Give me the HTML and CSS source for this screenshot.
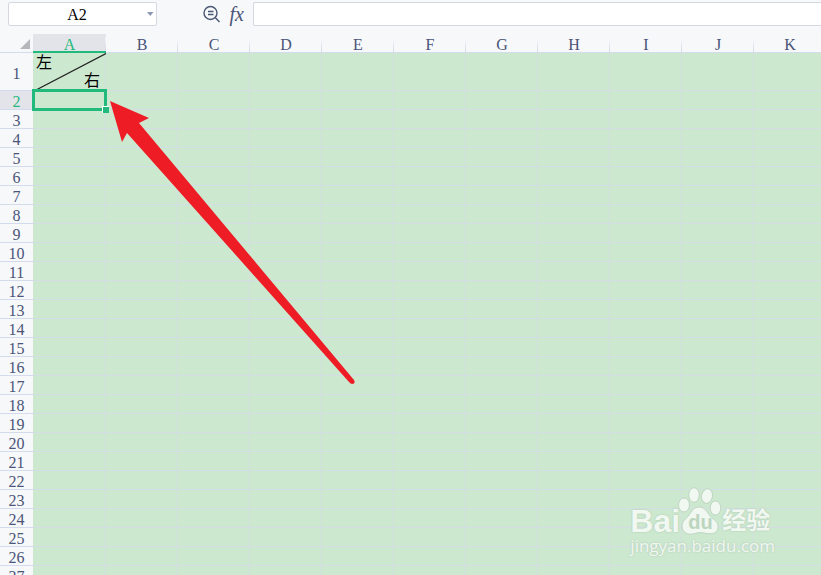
FILE: index.html
```html
<!DOCTYPE html>
<html lang="zh-CN">
<head>
    <meta charset="UTF-8">
    <meta name="viewport" content="width=device-width, initial-scale=1.0">
    <title>Spreadsheet</title>
    <link rel="stylesheet" href="styles.css">
</head>
<body>
    <header class="toolbar">
        <div class="name-box">
            <input type="text" class="name-input" value="A2" aria-label="Name box">
            <button type="button" class="name-toggle" aria-label="Show names">
                <svg width="7" height="4" viewBox="0 0 7 4"><path d="M0 0H6.5L3.3 4Z" fill="#8c98b3"/></svg>
            </button>
        </div>
        <div class="tools">
            <button type="button" class="tool" aria-label="Search">
                <svg width="18" height="18" viewBox="0 0 18 18" fill="none" stroke="#4a5673" stroke-width="1.4">
                    <circle cx="7.5" cy="8" r="6.5"/>
                    <path d="M12.2 12.6L16.5 17M5 6.5H10.5M5 9.5H10.5"/>
                </svg>
            </button>
            <button type="button" class="tool fx" aria-label="Insert function">fx</button>
        </div>
        <input type="text" class="formula-input" aria-label="Formula">
    </header>
    <main class="sheet">
        <table class="grid">
            <thead>
                <tr id="columns">
                    <th class="corner"><svg width="10" height="10" viewBox="0 0 10 10"><path d="M10 0V10H0Z" fill="#b5b7bb"/></svg></th>
                </tr>
            </thead>
            <tbody id="rows"></tbody>
        </table>
        <svg class="arrow" width="246" height="285" viewBox="0 0 246 285">
            <path d="M0 1L39 18L29 23L244 280Q246 284 242 284Q241 284 239 282L17 33L12 42Z" fill="#ee1c25"></path>
        </svg>
        <div class="watermark">
            <div class="watermark-logo">
                <span class="latin">Bai</span>
                <span class="paw">
                    <svg width="44" height="48" viewBox="0 0 44 48" fill="#f1f7f1" stroke="#bfd6c2" stroke-width="1">
                        <ellipse cx="6" cy="18" rx="5.5" ry="7"/>
                        <ellipse cx="16" cy="8" rx="5.3" ry="7.3"/>
                        <ellipse cx="29" cy="9" rx="5.5" ry="7.3" transform="rotate(12 29 9)"/>
                        <ellipse cx="37.5" cy="21" rx="5.3" ry="7"/>
                        <path d="M21 20C27 20 29 25 32 29C36 33 41 35 40 41C39 48 31 47 26 46C22 45 19 46 15 47C9 48 4 45 4 39C4 34 8 32 11 28C14 24 16 20 21 20Z"/>
                    </svg>
                    <span class="du">du</span>
                </span>
                <span class="han">经验</span>
            </div>
            <div class="watermark-url">jingyan.baidu.com</div>
        </div>
    </main>
    <script>
        const columns = 'ABCDEFGHIJK'.split('');
        const rowCount = 27;
        const headRow = document.getElementById('columns');
        const body = document.getElementById('rows');

        columns.forEach((name) => {
            const th = document.createElement('th');
            th.textContent = name;
            th.className = name === 'A' ? 'col-head active' : 'col-head';
            headRow.appendChild(th);
        });

        for (let i = 1; i <= rowCount; i++) {
            const row = document.createElement('tr');
            row.innerHTML = `<th class="row-head">${i}</th>` + '<td></td>'.repeat(columns.length);
            body.appendChild(row);
        }

        // A1 is split by a diagonal line
        body.rows[0].className = 'tall';
        body.rows[0].cells[1].innerHTML = `
            <div class="split">
                <svg class="diagonal" width="73" height="37" viewBox="0 0 73 37"><path d="M4 36.5L73 0.5" stroke="#222" stroke-width="1.2"/></svg>
                <span>左</span>
                <span class="split-right">右</span>
            </div>
        `;

        // A2 is selected
        body.rows[1].cells[0].classList.add('active');
        body.rows[1].cells[1].className = 'selected';
        body.rows[1].cells[1].innerHTML = '<div class="selection"></div>';
    </script>
</body>
</html>
```

FILE: styles.css
```css
* {
    box-sizing: border-box;
}

body {
    margin: 0;
    height: 100vh;
    overflow: hidden;
    display: flex;
    flex-direction: column;
    background-color: #f6f8fa;
    color: #4a5578;
    font-family: "Liberation Serif", "Noto Sans CJK SC", serif;
    font-size: 16px;
}

button {
    border: none;
    padding: 0;
    background: none;
    color: inherit;
    cursor: pointer;
}

.toolbar {
    display: flex;
    flex-shrink: 0;
    height: 34px;
    padding: 2px 0 8px 8px;
}

.name-box {
    display: flex;
    width: 149px;
    border: 1px solid #d5d8e0;
    border-radius: 2px;
    background-color: #fff;
}

.name-input {
    flex: 1;
    min-width: 0;
    border: none;
    padding: 2px 0 0;
    background: none;
    color: #000;
    font: inherit;
    text-align: center;
    outline: none;
}

.name-toggle {
    display: flex;
    align-items: center;
    justify-content: center;
    width: 11px;
}

.tools {
    display: flex;
    align-items: center;
    justify-content: flex-end;
    gap: 9px;
    width: 96px;
    padding-right: 9px;
}

.tool {
    display: flex;
}

.fx {
    font: italic 20px/20px "Liberation Serif", serif;
}

.formula-input {
    flex: 1;
    min-width: 0;
    border: 1px solid #d5d8e0;
    border-right: none;
    border-radius: 2px 0 0 2px;
    padding: 0 8px;
    background-color: #fff;
    outline: none;
}

.sheet {
    position: relative;
    flex: 1;
    min-height: 0;
    overflow: hidden;
}

.grid {
    width: 826px;
    table-layout: fixed;
    border-collapse: separate;
    border-spacing: 0;
}

th, td {
    height: 19px;
    padding: 0;
    font-weight: normal;
    line-height: 18px;
}

th {
    border-bottom: 1px solid #d3dbec;
    background-color: #f6f8fa;
}

td {
    border-right: 1px solid #d1dfdf;
    border-bottom: 1px solid #d4dce6;
    background-color: #cce8cf;
}

.corner {
    width: 33px;
    padding: 0 3px 3px 0;
    line-height: 0;
    text-align: right;
    vertical-align: bottom;
}

.col-head {
    width: 72px;
    padding-top: 3px;
    line-height: 15px;
    background-image: linear-gradient(#f6f8fa, #d3d8e6);
    background-position: right bottom;
    background-repeat: no-repeat;
    background-size: 1px 14px;
}

.col-head.active {
    width: 73px;
    border-bottom: 2px solid #22b97c;
    padding-top: 4px;
    line-height: 13px;
}

.row-head {
    padding-top: 3px;
    line-height: 15px;
}

.active {
    background-color: #e3e4e9;
    color: #22b97c;
}

.tall th, .tall td {
    height: 38px;
}

.split {
    position: relative;
    display: flex;
    justify-content: space-between;
    height: 37px;
    padding: 1px 5px 0 3px;
    color: #000;
}

.split-right {
    align-self: flex-end;
}

.diagonal {
    position: absolute;
    top: 0;
    left: 0;
}

.selected {
    position: relative;
}

.selection {
    position: absolute;
    top: -2px;
    left: -1px;
    right: -2px;
    bottom: -2px;
    border: 3px solid #22b97c;
}

.selection::after {
    content: "";
    position: absolute;
    right: -5px;
    bottom: -5px;
    width: 6px;
    height: 6px;
    border: 1px solid #fff;
    border-right: none;
    border-bottom: none;
    background-color: #22b97c;
}

.arrow {
    position: absolute;
    top: 66px;
    left: 110px;
}

.watermark {
    position: absolute;
    right: 46px;
    bottom: 18px;
    color: #f1f7f1;
    text-shadow: 0 0 2px #a9c4ac;
}

.watermark-logo {
    display: flex;
    align-items: flex-end;
    height: 48px;
}

.latin {
    width: 48px;
    font: bold 32px/28px "Liberation Sans", sans-serif;
}

.paw {
    position: relative;
    height: 48px;
}

.du {
    position: absolute;
    left: 10px;
    bottom: 3px;
    color: #bcd5bf;
    font: bold 20px/20px "Liberation Sans", sans-serif;
    text-shadow: none;
}

.han {
    font: bold 24px/32px "Noto Sans CJK SC", sans-serif;
}

.watermark-url {
    font: 17px/22px "Open Sans", sans-serif;
    text-align: right;
}
```
